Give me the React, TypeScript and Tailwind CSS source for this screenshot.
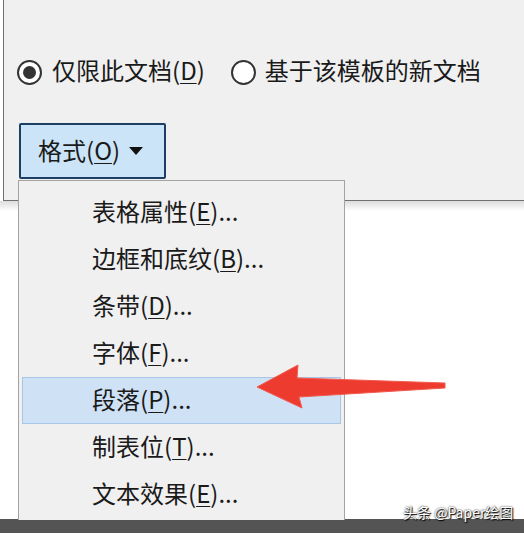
import React from "react";

const FONT = { fontFamily: '"Noto Sans CJK SC", "Noto Sans", sans-serif' };

const ITEMS: { label: string; key: string; active?: boolean }[] = [
  { label: "表格属性", key: "E" },
  { label: "边框和底纹", key: "B" },
  { label: "条带", key: "D" },
  { label: "字体", key: "F" },
  { label: "段落", key: "P", active: true },
  { label: "制表位", key: "T" },
  { label: "文本效果", key: "E" },
];

function Radio({ checked }: { checked?: boolean }) {
  return (
    <span className="w-[25px] h-[25px] rounded-full border-[2px] border-[#333] bg-white flex items-center justify-center shrink-0">
      {checked && <span className="w-[13px] h-[13px] rounded-full bg-[#333]" />}
    </span>
  );
}

function Label({ text, k }: { text: string; k: string }) {
  return (
    <span>
      {text}(<span className="underline underline-offset-[3px] decoration-1">{k}</span>)
    </span>
  );
}

export default function App() {
  return (
    <div className="relative w-[524px] h-[534px] overflow-hidden bg-white text-[#1a1a1a]" style={FONT}>
      {/* Dialog */}
      <div className="flex flex-col h-[533px]">
        <div className="ml-[3px] h-[201px] bg-[#f0f0f0] border-l border-b border-[#6f6f6f] pl-[13px] pt-[60px] flex flex-col">
          <div className="flex items-center h-[24px] text-[24px] leading-none">
            <Radio checked />
            <span className="ml-[10px] pb-[4px]">
              <Label text="仅限此文档" k="D" />
            </span>
            <span className="ml-[26px]">
              <Radio />
            </span>
            <span className="ml-[9px] pb-[4px]">基于该模板的新文档</span>
          </div>
          <div className="mt-[39px] ml-[2px] w-[147px] h-[56px] rounded-[2px] bg-[#cce4f7] border-2 border-[#1d3f63] flex items-center pl-[17px] gap-[9px] text-[24px] leading-none">
            <span className="pb-[3px]">
              <Label text="格式" k="O" />
            </span>
            <svg width="14" height="8" viewBox="0 0 14 8">
              <polygon points="0,0 14,0 7,8" fill="#111" />
            </svg>
          </div>
        </div>
        <div className="h-[10px] bg-gradient-to-b from-[#dcdcdc] to-white" />
        <div className="flex-1" />
        <div className="h-[14px] bg-[#545454]" />
      </div>

      {/* Dropdown menu */}
      <div className="absolute left-[18px] top-[180px] w-[327px] h-[340px] bg-[#f0f0f0] border border-b-0 border-[#a3a3a3] pt-[8px] px-[3px] flex flex-col">
        {ITEMS.map((it, i) => (
          <div
            key={i}
            className={`h-[47px] shrink-0 flex items-center pl-[69px] pb-[3px] text-[24px] leading-none border ${
              it.active ? "bg-[#cfe2f5] border-[#a8c6e6]" : "border-transparent"
            }`}
          >
            <Label text={it.label} k={it.key} />
            <span>...</span>
          </div>
        ))}
      </div>

      {/* Red arrow annotation */}
      <svg className="absolute left-0 top-0" width="524" height="534" viewBox="0 0 524 534">
        <polygon
          points="257,387 298,365 297,378 445,383 445,388 299,397 302,408"
          fill="#ee3b2f"
          stroke="#f25a4f"
          strokeWidth="1"
          strokeLinejoin="round"
        />
      </svg>

      {/* Watermark */}
      <div
        className="absolute left-[403px] top-[505px] text-[14px] leading-none text-white"
        style={{ ...FONT, textShadow: "0 0 2px #000, 1px 1px 1px #000" }}
      >
        头条 @Paper绘图
      </div>
    </div>
  );
}
